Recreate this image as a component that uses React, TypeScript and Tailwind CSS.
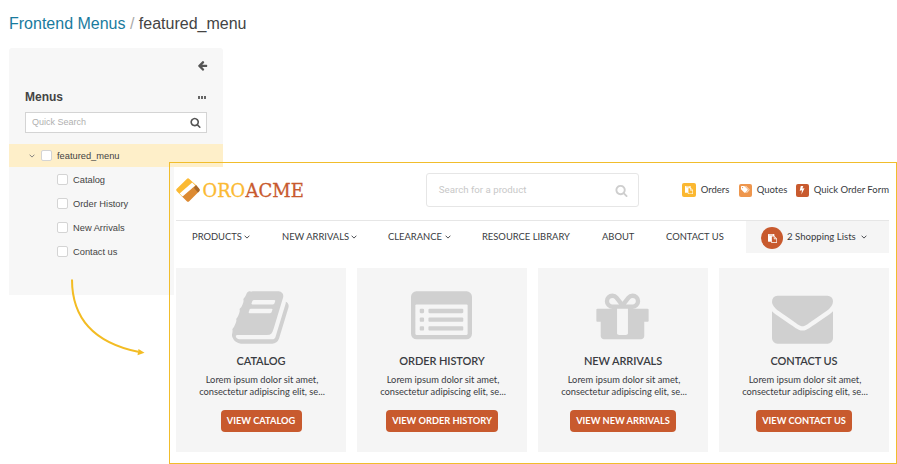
import React from "react";

const SANS = "font-['Liberation_Sans',Arial,sans-serif]";
const LATO = "font-[Lato,sans-serif]";

const paths = {
  search:
    "M1216 832q0-185-131.500-316.500t-316.500-131.500-316.500 131.500-131.500 316.500 131.500 316.500 316.500 131.500 316.500-131.500 131.500-316.500zm512 832q0 52-38 90t-90 38q-54 0-90-38l-343-342q-179 124-399 124-143 0-273.500-55.500t-225-150-150-225-55.500-273.500 55.500-273.500 150-225 225-150 273.500-55.500 273.500 55.500 225 150 150 225 55.500 273.500q0 220-124 399l343 343q37 37 37 90z",
  arrowLeft:
    "M1664 896v128q0 53-32.500 90.500t-84.500 37.500h-704l293 294q38 36 38 90t-38 90l-75 76q-37 37-90 37-52 0-91-37l-651-652q-37-37-37-90 0-52 37-91l651-650q38-38 91-38 52 0 90 38l75 74q38 38 38 91t-38 91l-293 293h704q52 0 84.500 37.500t32.500 90.500z",
  book:
    "M1639 478q40 57 18 129l-275 906q-19 64-76.500 107.500t-122.500 43.500h-923q-77 0-148.500-53.500t-99.500-131.500q-24-67-2-127 0-4 3-27t4-37q1-8-3-21.500t-3-19.500q2-11 8-21t16.500-23.500 16.500-23.500q23-38 45-91.500t30-91.500q3-10 .5-30t-.5-28q3-11 17-28t17-23q21-36 42-92t25-90q1-9-2.500-32t.5-28q4-13 22-30.500t22-22.500q19-26 42.500-84.500t27.500-96.500q1-8-3-25.500t-2-26.500q2-8 9-18t18-23 17-21q8-12 16.500-30.500t15-35 16-36 19.500-32 26.500-23.500 36-11.500 47.500 5.500l-1 3q38-9 51-9h761q74 0 114 56t18 130l-274 906q-36 119-71.500 153.500t-128.500 34.500h-869q-27 0-38 15-11 16-1 43 24 70 144 70h923q29 0 56-15.500t35-41.500l300-987q7-22 5-57 38 15 59 43zm-1064 2q-4 13 2 22.500t20 9.500h608q13 0 25.500-9.500t16.500-22.500l21-64q4-13-2-22.500t-20-9.500h-608q-13 0-25.500 9.500t-16.500 22.500zm-83 256q-4 13 2 22.500t20 9.500h608q13 0 25.500-9.500t16.500-22.500l21-64q4-13-2-22.500t-20-9.500h-608q-13 0-25.500 9.500t-16.500 22.500z",
  listAlt:
    "M384 1184v64q0 13-9.500 22.500t-22.500 9.500h-64q-13 0-22.500-9.500t-9.500-22.500v-64q0-13 9.500-22.500t22.500-9.500h64q13 0 22.500 9.500t9.500 22.500zm0-256v64q0 13-9.500 22.500t-22.500 9.500h-64q-13 0-22.500-9.500t-9.500-22.500v-64q0-13 9.500-22.500t22.500-9.500h64q13 0 22.500 9.500t9.500 22.500zm0-256v64q0 13-9.500 22.500t-22.500 9.500h-64q-13 0-22.500-9.500t-9.500-22.500v-64q0-13 9.500-22.500t22.500-9.500h64q13 0 22.500 9.500t9.500 22.500zm1152 512v64q0 13-9.500 22.500t-22.500 9.500h-960q-13 0-22.500-9.500t-9.500-22.500v-64q0-13 9.500-22.500t22.500-9.500h960q13 0 22.500 9.500t9.500 22.500zm0-256v64q0 13-9.500 22.500t-22.500 9.500h-960q-13 0-22.500-9.500t-9.500-22.500v-64q0-13 9.500-22.500t22.500-9.500h960q13 0 22.500 9.500t9.500 22.500zm0-256v64q0 13-9.500 22.500t-22.500 9.500h-960q-13 0-22.500-9.500t-9.500-22.500v-64q0-13 9.500-22.500t22.500-9.500h960q13 0 22.500 9.500t9.500 22.500zm128 704v-832q0-13-9.500-22.500t-22.500-9.500h-1472q-13 0-22.500 9.500t-9.500 22.500v832q0 13 9.500 22.500t22.500 9.500h1472q13 0 22.500-9.500t9.500-22.500zm128-1088v1088q0 66-47 113t-113 47h-1472q-66 0-113-47t-47-113v-1088q0-66 47-113t113-47h1472q66 0 113 47t47 113z",
  gift:
    "M1056 1356v-716h-320v716q0 25 18 38.500t46 13.500h192q28 0 46-13.500t18-38.500zm-456-844h195l-126-161q-26-31-69-31-40 0-68 28t-28 68 28 68 68 28zm688-96q0-40-28-68t-68-28q-43 0-69 31l-125 161h194q40 0 68-28t28-68zm376 256v320q0 14-9 23t-23 9h-96v416q0 40-28 68t-68 28h-1088q-40 0-68-28t-28-68v-416h-96q-14 0-23-9t-9-23v-320q0-14 9-23t23-9h440q-93 0-158.500-65.500t-65.500-158.500 65.500-158.500 158.500-65.500q107 0 168 77l128 165 128-165q61-77 168-77 93 0 158.500 65.500t65.500 158.500-65.500 158.500-158.500 65.500h440q14 0 23 9t9 23z",
  envelope:
    "M1792 710v794q0 66-47 113t-113 47h-1472q-66 0-113-47t-47-113v-794q44 49 101 87 362 246 497 345 57 42 92.500 65.500t94.500 48 110 24.500h2q51 0 110-24.500t94.500-48 92.500-65.500q170-123 498-345 57-39 100-87zm0-294q0 79-49 151t-122 123q-376 261-468 325-10 7-42.500 31t-54 38.500-52 32.500-57.500 27-50 9h-2q-23 0-50-9t-57.500-27-52-32.500-54-38.500-42.500-31q-91-64-262-182.500t-205-142.500q-62-42-117-115.500t-55-136.500q0-78 41.500-130t118.500-52h1472q65 0 112.500 47t47.500 113z",
  paste:
    "M768 1664h896v-640h-416q-40 0-68-28t-28-68v-416h-384v1152zm256-1440v-64q0-13-9.500-22.500t-22.500-9.500h-704q-13 0-22.500 9.500t-9.500 22.500v64q0 13 9.500 22.500t22.500 9.500h704q13 0 22.500-9.500t9.500-22.500zm256 672h299l-299-299v299zm512 128v672q0 40-28 68t-68 28h-960q-40 0-68-28t-28-68v-160h-544q-40 0-68-28t-28-68v-1344q0-40 28-68t68-28h1088q40 0 68 28t28 68v328q21 13 36 28l408 408q28 28 48 76t20 88z",
};

function Glyph({ d, className }: { d: string; className: string }) {
  return (
    <svg viewBox="0 0 1792 1792" fill="currentColor" className={`block shrink-0 ${className}`}>
      <path d={d} />
    </svg>
  );
}

function Chevron({ className }: { className: string }) {
  return (
    <svg viewBox="0 0 6 4" fill="none" stroke="currentColor" strokeWidth="0.9" className={`block shrink-0 ${className}`}>
      <path d="M0.6 0.7 L3 3.1 L5.400 0.7" />
    </svg>
  );
}

function Checkbox() {
  return <span className="block size-[11px] shrink-0 rounded-[2px] border border-[#d4d4d4] bg-white" />;
}

function Sidebar() {
  return (
    <aside className={`ml-[9px] mt-[14px] h-[247px] w-[214px] rounded-t-[3px] bg-[#f7f7f7] text-[#444] ${SANS}`}>
      <div className="flex h-[35px] items-center justify-end pr-[15px]">
        <Glyph d={paths.arrowLeft} className="size-[11px] text-[#555]" />
      </div>
      <div className="flex h-[28px] items-center justify-between pl-4 pr-[17px]">
        <h2 className="text-[12px] font-bold leading-4">Menus</h2>
        <span className="flex gap-px">
          <i className="h-[3px] w-[2px] bg-[#666]" />
          <i className="h-[3px] w-[2px] bg-[#666]" />
          <i className="h-[3px] w-[2px] bg-[#666]" />
        </span>
      </div>
      <div className="ml-4 mt-px flex h-[21px] w-[182px] items-center justify-between border border-[#d4d4d4] bg-white pb-px pl-[6px] pr-[5px]">
        <span className="text-[9px] leading-3 text-[#b0b0b0]">Quick Search</span>
        <Glyph d={paths.search} className="size-[11px] text-[#555]" />
      </div>
      <div className="mt-[11px] flex h-[23px] items-center bg-[#feefc9] pl-5">
        <Chevron className="w-[6px] text-[#777]" />
        <span className="ml-[6px]">
          <Checkbox />
        </span>
        <span className="ml-[5px] text-[9.300px] leading-3">featured_menu</span>
      </div>
      {["Catalog", "Order History", "New Arrivals", "Contact us"].map((label) => (
        <div key={label} className="flex h-6 items-center gap-[5px] pl-12 pt-px">
          <Checkbox />
          <span className="text-[9.300px] leading-3">{label}</span>
        </div>
      ))}
    </aside>
  );
}

function Logo() {
  return (
    <svg width="130" height="26" viewBox="0 0 130 26" className="block">
      <path d="M10.800 0.900 Q12 -0.200 13.300 0.900 L20 7 L6 18.500 L0.800 13.200 Q-0.400 12 0.800 10.800Z" fill="#fbba34" />
      <path d="M20 7 L23.200 10.800 Q24.300 12 23.200 13.200 L13.200 23.200 Q12 24.300 10.800 23.200 L5.800 18.300Z" fill="#dc8a32" />
      <path d="M20 7 L23.200 10.800 Q24.300 12 23.200 13.200 L22 14.400 L17.800 9.800Z" fill="#a96a2c" />
      <path d="M16.200 4.600 L19.200 7.600 L6.600 18.600 L3.600 15.600Z" fill="#fff" />
      <g fontSize="19" strokeWidth="0.300" className="font-['DejaVu_Serif',serif]">
        <text x="0" y="19" fill="#fbba34" stroke="#fbba34" transform="translate(26.500 0) scale(0.940 1)">
          ORO
        </text>
        <text x="0" y="19" fill="#c85a2e" stroke="#c85a2e" transform="translate(69.500 0) scale(0.950 1)">
          ACME
        </text>
      </g>
    </svg>
  );
}

function TagIcon() {
  return (
    <svg viewBox="0 0 10 8" className="w-[9px]">
      <path d="M0 0.800 Q0 0 0.800 0 H3.600 L7.400 3.700 Q7.900 4.200 7.400 4.700 L4.800 7.400 Q4.300 7.900 3.800 7.400 L0 3.600Z" fill="#fff" />
      <path d="M5 0 L8.800 3.800 Q9.200 4.200 8.800 4.700 L6.200 7.600" stroke="#fff" strokeWidth="0.900" fill="none" />
      <circle cx="1.700" cy="1.700" r="0.700" fill="#ee964d" />
    </svg>
  );
}

function BoltIcon() {
  return (
    <svg viewBox="0 0 6 9" className="w-[6px]">
      <path d="M1.800 0 H4.300 L3.400 2.600 L5.500 2.200 L2.400 8.500 L3 4.300 L0.700 4.800Z" fill="#fff" />
    </svg>
  );
}

function NavLabel({ text, width, textWidth, menu }: { text: string; width: number; textWidth: number; menu?: boolean }) {
  return (
    <a className="flex shrink-0 items-center" style={{ width }}>
      <span className="whitespace-nowrap" style={{ width: textWidth }}>
        {text}
      </span>
      {menu && <Chevron className="ml-[2px] mt-px w-[6px]" />}
    </a>
  );
}

const cards = [
  { title: "CATALOG", icon: paths.book, button: "VIEW CATALOG", width: 81, shift: "pl-[2px]" },
  { title: "ORDER HISTORY", icon: paths.listAlt, button: "VIEW ORDER HISTORY", width: 112, shift: "pr-[2px]" },
  { title: "NEW ARRIVALS", icon: paths.gift, button: "VIEW NEW ARRIVALS", width: 106, shift: "pr-[2px]" },
  { title: "CONTACT US", icon: paths.envelope, button: "VIEW CONTACT US", width: 96, shift: "pr-[3px]" },
];

function Storefront() {
  return (
    <section className={`absolute left-[169px] top-[162px] h-[302px] w-[728px] border border-[#f1bd2c] pl-1 pt-1 ${LATO}`}>
      <div className="h-full w-full bg-white pl-[2px] pr-[7px] text-[#393b41]">
        <header className="flex h-[54px] border-b border-[#e6e6e6]">
          <div className="w-[250px] pt-[11px]">
            <Logo />
          </div>
          <div className="mt-[6px] flex h-[34px] w-[213px] items-center justify-between rounded-[3px] border border-[#e6e6e6] pl-3 pr-[10px]">
            <span className="font-[Roboto,sans-serif] text-[9.700px] leading-3 text-[#c8c8c8]">Search for a product</span>
            <Glyph d={paths.search} className="size-[13px] text-[#cecece]" />
          </div>
          <div className="ml-[43px] mt-[16px] flex h-[14px] items-center whitespace-nowrap text-[9.500px]">
            <span className="flex size-[14px] items-center justify-center rounded-[2px] bg-[#fbb831] text-white">
              <Glyph d={paths.paste} className="size-[8px]" />
            </span>
            <span className="ml-[5px] w-[38px]">Orders</span>
            <span className="flex size-[13px] items-center justify-center rounded-[2px] bg-[#ee964d]">
              <TagIcon />
            </span>
            <span className="ml-[5px] w-[39px]">Quotes</span>
            <span className="flex size-[13px] items-center justify-center rounded-[2px] bg-[#c85a2e]">
              <BoltIcon />
            </span>
            <span className="ml-[5px]">Quick Order Form</span>
          </div>
        </header>
        <nav className="flex h-8 items-center pl-4 text-[9.400px]">
          <NavLabel text="PRODUCTS" width={90} textWidth={50} menu />
          <NavLabel text="NEW ARRIVALS" width={106} textWidth={67} menu />
          <NavLabel text="CLEARANCE" width={94} textWidth={55} menu />
          <NavLabel text="RESOURCE LIBRARY" width={120} textWidth={88} />
          <NavLabel text="ABOUT" width={64} textWidth={32} />
          <NavLabel text="CONTACT US" width={80} textWidth={58} />
          <div className="flex h-full w-[143px] items-center bg-[#f5f5f5] pl-[15px]">
            <span className="mt-[2px] flex size-[22px] items-center justify-center rounded-full bg-[#c85a2e] text-white">
              <Glyph d={paths.paste} className="size-[9px]" />
            </span>
            <span className="ml-1 w-[74px] whitespace-nowrap text-[9.600px]">2 Shopping Lists</span>
            <Chevron className="w-[6px]" />
          </div>
        </nav>
        <div className="mt-[15px] flex gap-[11px]">
          {cards.map((card) => (
            <article key={card.title} className="flex h-[184px] w-[170px] flex-col items-center bg-[#f5f5f5]">
              <div className={`h-[86px] pt-[19px] ${card.shift}`}>
                <Glyph d={card.icon} className="size-[61px] text-[#d0d0d0]" />
              </div>
              <h3 className="text-[11px] font-semibold leading-[14px] tracking-[-0.1px]">{card.title}</h3>
              <p className="mt-[6px] whitespace-nowrap pl-[2px] text-center text-[9.300px] leading-[12px]">
                Lorem ipsum dolor sit amet,
                <br />
                consectetur adipiscing elit, se...
              </p>
              <button
                className="mt-[12px] h-[22px] whitespace-nowrap rounded-[4px] bg-[#c85a2e] text-[9.250px] font-bold leading-[22px] text-white"
                style={{ width: card.width }}
              >
                {card.button}
              </button>
            </article>
          ))}
        </div>
      </div>
    </section>
  );
}

export default function App() {
  return (
    <main className="relative h-[464px] w-[897px] overflow-hidden bg-white">
      <h1 className={`ml-[9px] pt-[13px] text-[16px] leading-[21px] text-[#444] ${SANS}`}>
        <a className="text-[#197b9e]">Frontend Menus</a>
        <span className="text-[#aaa]"> / </span>
        featured_menu
      </h1>
      <Sidebar />
      <svg className="absolute left-[60px] top-[275px]" width="100" height="90" viewBox="0 0 100 90">
        <path d="M12 4.500 C12 45 36 68 78 76.800" stroke="#f3bc23" strokeWidth="2" fill="none" />
        <path d="M78.500 74 L84.500 77.700 L77.500 80.200Z" fill="#f3bc23" />
      </svg>
      <Storefront />
    </main>
  );
}
